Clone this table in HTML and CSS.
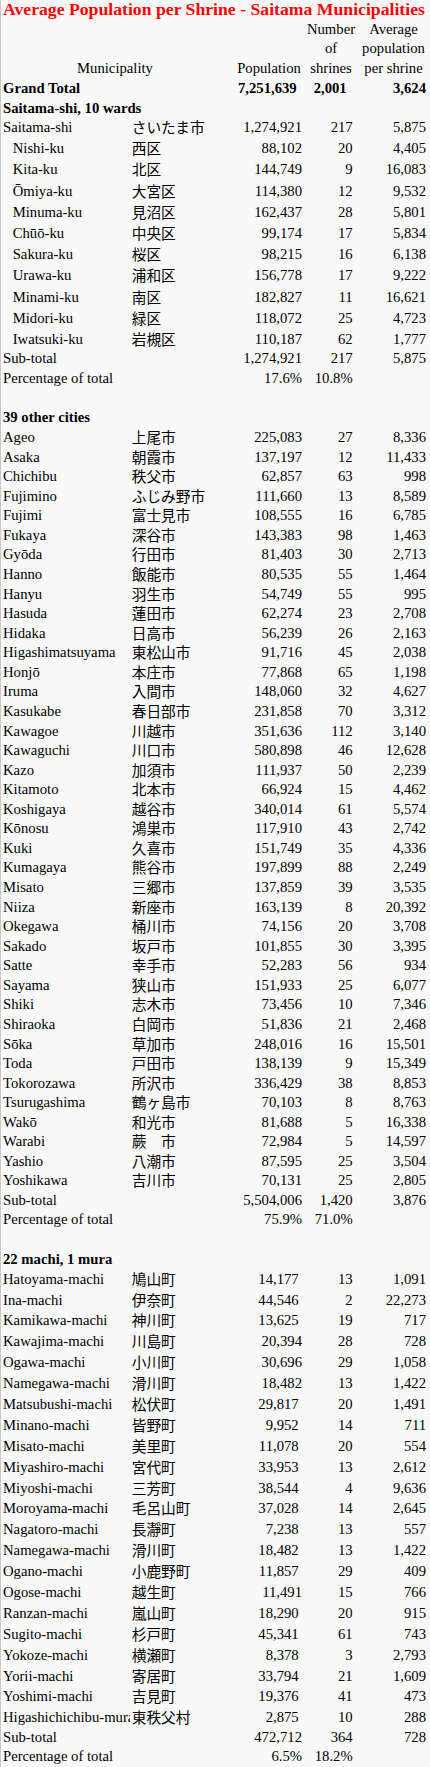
FILE: index.html
```html
<!DOCTYPE html>
<html lang="en">
<head>
<meta charset="utf-8">
<title>Average Population per Shrine - Saitama Municipalities</title>
<link rel="stylesheet" href="styles.css">
</head>
<body>
<table class="sheet">
<colgroup><col class="ca"><col class="cb"><col class="cc"><col class="cd"><col class="ce"></colgroup>
<tbody>
<tr class="title"><td class="t" colspan="5">Average Population per Shrine - Saitama Municipalities</td></tr>
<tr class="head"><td class="h hm" colspan="2">Municipality</td><td class="h">Population</td><td class="h">Number<br>of<br>shrines</td><td class="h">Average<br>population<br>per shrine</td></tr>
<tr class="gt b"><td class="n" colspan="2">Grand Total</td><td class="c gc">7,251,639</td><td class="d gd">2,001</td><td class="e">3,624</td></tr>
<tr class="b"><td class="n" colspan="5">Saitama-shi, 10 wards</td></tr>
<tr><td class="n">Saitama-shi</td><td class="j">さいたま市</td><td class="c">1,274,921</td><td class="d">217</td><td class="e">5,875</td></tr>
<tr class="w"><td class="n i">Nishi-ku</td><td class="j">西区</td><td class="c">88,102</td><td class="d">20</td><td class="e">4,405</td></tr>
<tr class="w"><td class="n i">Kita-ku</td><td class="j">北区</td><td class="c">144,749</td><td class="d">9</td><td class="e">16,083</td></tr>
<tr class="w"><td class="n i">Ōmiya-ku</td><td class="j">大宮区</td><td class="c">114,380</td><td class="d">12</td><td class="e">9,532</td></tr>
<tr class="w"><td class="n i">Minuma-ku</td><td class="j">見沼区</td><td class="c">162,437</td><td class="d">28</td><td class="e">5,801</td></tr>
<tr class="w"><td class="n i">Chūō-ku</td><td class="j">中央区</td><td class="c">99,174</td><td class="d">17</td><td class="e">5,834</td></tr>
<tr class="w"><td class="n i">Sakura-ku</td><td class="j">桜区</td><td class="c">98,215</td><td class="d">16</td><td class="e">6,138</td></tr>
<tr class="w"><td class="n i">Urawa-ku</td><td class="j">浦和区</td><td class="c">156,778</td><td class="d">17</td><td class="e">9,222</td></tr>
<tr class="w"><td class="n i">Minami-ku</td><td class="j">南区</td><td class="c">182,827</td><td class="d">11</td><td class="e">16,621</td></tr>
<tr class="w"><td class="n i">Midori-ku</td><td class="j">緑区</td><td class="c">118,072</td><td class="d">25</td><td class="e">4,723</td></tr>
<tr class="w"><td class="n i">Iwatsuki-ku</td><td class="j">岩槻区</td><td class="c">110,187</td><td class="d">62</td><td class="e">1,777</td></tr>
<tr><td class="n">Sub-total</td><td class="j"></td><td class="c">1,274,921</td><td class="d">217</td><td class="e">5,875</td></tr>
<tr><td class="n">Percentage of total</td><td class="j"></td><td class="c">17.6%</td><td class="d">10.8%</td><td class="e"></td></tr>
<tr><td class="n" colspan="5">&nbsp;</td></tr>
<tr class="b"><td class="n" colspan="5">39 other cities</td></tr>
<tr class="tall"><td class="n">Ageo</td><td class="j">上尾市</td><td class="c">225,083</td><td class="d">27</td><td class="e">8,336</td></tr>
<tr class="ct"><td class="n">Asaka</td><td class="j">朝霞市</td><td class="c">137,197</td><td class="d">12</td><td class="e">11,433</td></tr>
<tr class="ct"><td class="n">Chichibu</td><td class="j">秩父市</td><td class="c">62,857</td><td class="d">63</td><td class="e">998</td></tr>
<tr class="ct"><td class="n">Fujimino</td><td class="j">ふじみ野市</td><td class="c">111,660</td><td class="d">13</td><td class="e">8,589</td></tr>
<tr class="ct"><td class="n">Fujimi</td><td class="j">富士見市</td><td class="c">108,555</td><td class="d">16</td><td class="e">6,785</td></tr>
<tr class="ct"><td class="n">Fukaya</td><td class="j">深谷市</td><td class="c">143,383</td><td class="d">98</td><td class="e">1,463</td></tr>
<tr class="ct"><td class="n">Gyōda</td><td class="j">行田市</td><td class="c">81,403</td><td class="d">30</td><td class="e">2,713</td></tr>
<tr class="ct"><td class="n">Hanno</td><td class="j">飯能市</td><td class="c">80,535</td><td class="d">55</td><td class="e">1,464</td></tr>
<tr class="ct"><td class="n">Hanyu</td><td class="j">羽生市</td><td class="c">54,749</td><td class="d">55</td><td class="e">995</td></tr>
<tr class="ct"><td class="n">Hasuda</td><td class="j">蓮田市</td><td class="c">62,274</td><td class="d">23</td><td class="e">2,708</td></tr>
<tr class="ct"><td class="n">Hidaka</td><td class="j">日高市</td><td class="c">56,239</td><td class="d">26</td><td class="e">2,163</td></tr>
<tr class="ct"><td class="n">Higashimatsuyama</td><td class="j">東松山市</td><td class="c">91,716</td><td class="d">45</td><td class="e">2,038</td></tr>
<tr class="ct"><td class="n">Honjō</td><td class="j">本庄市</td><td class="c">77,868</td><td class="d">65</td><td class="e">1,198</td></tr>
<tr class="ct"><td class="n">Iruma</td><td class="j">入間市</td><td class="c">148,060</td><td class="d">32</td><td class="e">4,627</td></tr>
<tr class="ct"><td class="n">Kasukabe</td><td class="j">春日部市</td><td class="c">231,858</td><td class="d">70</td><td class="e">3,312</td></tr>
<tr class="ct"><td class="n">Kawagoe</td><td class="j">川越市</td><td class="c">351,636</td><td class="d">112</td><td class="e">3,140</td></tr>
<tr class="ct"><td class="n">Kawaguchi</td><td class="j">川口市</td><td class="c">580,898</td><td class="d">46</td><td class="e">12,628</td></tr>
<tr class="ct"><td class="n">Kazo</td><td class="j">加須市</td><td class="c">111,937</td><td class="d">50</td><td class="e">2,239</td></tr>
<tr class="ct"><td class="n">Kitamoto</td><td class="j">北本市</td><td class="c">66,924</td><td class="d">15</td><td class="e">4,462</td></tr>
<tr class="ct"><td class="n">Koshigaya</td><td class="j">越谷市</td><td class="c">340,014</td><td class="d">61</td><td class="e">5,574</td></tr>
<tr class="ct"><td class="n">Kōnosu</td><td class="j">鴻巣市</td><td class="c">117,910</td><td class="d">43</td><td class="e">2,742</td></tr>
<tr class="ct"><td class="n">Kuki</td><td class="j">久喜市</td><td class="c">151,749</td><td class="d">35</td><td class="e">4,336</td></tr>
<tr class="ct"><td class="n">Kumagaya</td><td class="j">熊谷市</td><td class="c">197,899</td><td class="d">88</td><td class="e">2,249</td></tr>
<tr class="ct"><td class="n">Misato</td><td class="j">三郷市</td><td class="c">137,859</td><td class="d">39</td><td class="e">3,535</td></tr>
<tr class="ct"><td class="n">Niiza</td><td class="j">新座市</td><td class="c">163,139</td><td class="d">8</td><td class="e">20,392</td></tr>
<tr class="ct"><td class="n">Okegawa</td><td class="j">桶川市</td><td class="c">74,156</td><td class="d">20</td><td class="e">3,708</td></tr>
<tr class="ct"><td class="n">Sakado</td><td class="j">坂戸市</td><td class="c">101,855</td><td class="d">30</td><td class="e">3,395</td></tr>
<tr class="ct"><td class="n">Satte</td><td class="j">幸手市</td><td class="c">52,283</td><td class="d">56</td><td class="e">934</td></tr>
<tr class="ct"><td class="n">Sayama</td><td class="j">狭山市</td><td class="c">151,933</td><td class="d">25</td><td class="e">6,077</td></tr>
<tr class="ct"><td class="n">Shiki</td><td class="j">志木市</td><td class="c">73,456</td><td class="d">10</td><td class="e">7,346</td></tr>
<tr class="ct"><td class="n">Shiraoka</td><td class="j">白岡市</td><td class="c">51,836</td><td class="d">21</td><td class="e">2,468</td></tr>
<tr class="ct"><td class="n">Sōka</td><td class="j">草加市</td><td class="c">248,016</td><td class="d">16</td><td class="e">15,501</td></tr>
<tr class="ct"><td class="n">Toda</td><td class="j">戸田市</td><td class="c">138,139</td><td class="d">9</td><td class="e">15,349</td></tr>
<tr class="ct"><td class="n">Tokorozawa</td><td class="j">所沢市</td><td class="c">336,429</td><td class="d">38</td><td class="e">8,853</td></tr>
<tr class="ct"><td class="n">Tsurugashima</td><td class="j">鶴ヶ島市</td><td class="c">70,103</td><td class="d">8</td><td class="e">8,763</td></tr>
<tr class="ct"><td class="n">Wakō</td><td class="j">和光市</td><td class="c">81,688</td><td class="d">5</td><td class="e">16,338</td></tr>
<tr class="ct"><td class="n">Warabi</td><td class="j">蕨　市</td><td class="c">72,984</td><td class="d">5</td><td class="e">14,597</td></tr>
<tr class="ct"><td class="n">Yashio</td><td class="j">八潮市</td><td class="c">87,595</td><td class="d">25</td><td class="e">3,504</td></tr>
<tr class="ct"><td class="n">Yoshikawa</td><td class="j">吉川市</td><td class="c">70,131</td><td class="d">25</td><td class="e">2,805</td></tr>
<tr><td class="n">Sub-total</td><td class="j"></td><td class="c">5,504,006</td><td class="d">1,420</td><td class="e">3,876</td></tr>
<tr><td class="n">Percentage of total</td><td class="j"></td><td class="c">75.9%</td><td class="d">71.0%</td><td class="e"></td></tr>
<tr class="x"><td class="n" colspan="5">&nbsp;</td></tr>
<tr class="x b"><td class="n" colspan="5">22 machi, 1 mura</td></tr>
<tr><td class="n">Hatoyama-machi</td><td class="j">鳩山町</td><td class="c s">14,177</td><td class="d">13</td><td class="e">1,091</td></tr>
<tr class="m"><td class="n">Ina-machi</td><td class="j">伊奈町</td><td class="c s">44,546</td><td class="d">2</td><td class="e">22,273</td></tr>
<tr class="m"><td class="n">Kamikawa-machi</td><td class="j">神川町</td><td class="c s">13,625</td><td class="d">19</td><td class="e">717</td></tr>
<tr class="m"><td class="n">Kawajima-machi</td><td class="j">川島町</td><td class="c">20,394</td><td class="d">28</td><td class="e">728</td></tr>
<tr class="m"><td class="n">Ogawa-machi</td><td class="j">小川町</td><td class="c">30,696</td><td class="d">29</td><td class="e">1,058</td></tr>
<tr class="m"><td class="n">Namegawa-machi</td><td class="j">滑川町</td><td class="c">18,482</td><td class="d">13</td><td class="e">1,422</td></tr>
<tr class="m"><td class="n">Matsubushi-machi</td><td class="j">松伏町</td><td class="c s">29,817</td><td class="d">20</td><td class="e">1,491</td></tr>
<tr class="m"><td class="n">Minano-machi</td><td class="j">皆野町</td><td class="c s">9,952</td><td class="d">14</td><td class="e">711</td></tr>
<tr class="m"><td class="n">Misato-machi</td><td class="j">美里町</td><td class="c s">11,078</td><td class="d">20</td><td class="e">554</td></tr>
<tr class="m"><td class="n">Miyashiro-machi</td><td class="j">宮代町</td><td class="c s">33,953</td><td class="d">13</td><td class="e">2,612</td></tr>
<tr class="m"><td class="n">Miyoshi-machi</td><td class="j">三芳町</td><td class="c s">38,544</td><td class="d">4</td><td class="e">9,636</td></tr>
<tr class="m"><td class="n">Moroyama-machi</td><td class="j">毛呂山町</td><td class="c s">37,028</td><td class="d">14</td><td class="e">2,645</td></tr>
<tr class="m"><td class="n">Nagatoro-machi</td><td class="j">長瀞町</td><td class="c s">7,238</td><td class="d">13</td><td class="e">557</td></tr>
<tr class="m"><td class="n">Namegawa-machi</td><td class="j">滑川町</td><td class="c s">18,482</td><td class="d">13</td><td class="e">1,422</td></tr>
<tr class="m"><td class="n">Ogano-machi</td><td class="j">小鹿野町</td><td class="c s">11,857</td><td class="d">29</td><td class="e">409</td></tr>
<tr class="m"><td class="n">Ogose-machi</td><td class="j">越生町</td><td class="c">11,491</td><td class="d">15</td><td class="e">766</td></tr>
<tr class="m"><td class="n">Ranzan-machi</td><td class="j">嵐山町</td><td class="c s">18,290</td><td class="d">20</td><td class="e">915</td></tr>
<tr class="m"><td class="n">Sugito-machi</td><td class="j">杉戸町</td><td class="c s">45,341</td><td class="d">61</td><td class="e">743</td></tr>
<tr class="m"><td class="n">Yokoze-machi</td><td class="j">横瀬町</td><td class="c s">8,378</td><td class="d">3</td><td class="e">2,793</td></tr>
<tr class="m"><td class="n">Yorii-machi</td><td class="j">寄居町</td><td class="c s">33,794</td><td class="d">21</td><td class="e">1,609</td></tr>
<tr class="m"><td class="n">Yoshimi-machi</td><td class="j">吉見町</td><td class="c s">19,376</td><td class="d">41</td><td class="e">473</td></tr>
<tr class="m"><td class="n clip">Higashichichibu-mura</td><td class="j">東秩父村</td><td class="c s">2,875</td><td class="d">10</td><td class="e">288</td></tr>
<tr><td class="n">Sub-total</td><td class="j"></td><td class="c">472,712</td><td class="d">364</td><td class="e">728</td></tr>
<tr><td class="n">Percentage of total</td><td class="j"></td><td class="c">6.5%</td><td class="d">18.2%</td><td class="e"></td></tr>
</tbody>
</table>
</body>
</html>
```
FILE: styles.css
```css
html, body {
  margin: 0;
  padding: 0;
}
body {
  background: #f9f9f9;
  color: #000;
  font-family: "Liberation Serif", "Times New Roman", serif;
  border-left: 1px solid #c8c8c8;
  width: 429px;
  min-height: 1767px;
}
.sheet {
  border-collapse: collapse;
  table-layout: fixed;
  width: 429px;
  font-size: 14.7px;
  line-height: 16px;
}
.ca { width: 129px; }
.cb { width: 103px; }
.cc { width: 72px; }
.cd { width: 52px; }
.ce { width: 73px; }

.sheet tr { height: 19.4px; }
.sheet tr.title { height: 19.5px; }
.sheet tr.gt { height: 18px; }
.sheet tr.w { height: 21.2px; }
.sheet tr.tall { height: 20.6px; }
.sheet tr.ct { height: 19.57px; }
.sheet tr.x { height: 20px; }
.sheet tr.m { height: 20.9px; }

.sheet td {
  vertical-align: bottom;
  white-space: nowrap;
}
.sheet .b td { font-weight: bold; }

.sheet .t {
  color: #f00;
  font-weight: bold;
  font-size: 17.7px;
  line-height: 19.5px;
  padding: 0 0 0 2px;
}
.sheet .h {
  text-align: center;
  line-height: 19.6px;
  padding: 0;
}
.sheet .hm { padding-right: 4px; }

.sheet .n { padding: 0 0 0 2px; }
.sheet .i { padding-left: 11.7px; }
.sheet .clip { overflow: hidden; text-overflow: clip; }
.sheet .j {
  font-family: "Noto Sans CJK JP", "Noto Sans CJK SC", sans-serif;
  padding: 0 0 0 1.7px;
}
.sheet .c { text-align: right; padding: 0 3px 0 0; }
.sheet .c.s { padding-right: 6.3px; }
.sheet .d { text-align: right; padding: 0 4.3px 0 0; }
.sheet .e { text-align: right; padding: 0 4px 0 0; }
.sheet .gc { padding-right: 8.3px; }
.sheet .gd { padding-right: 10.3px; }
```
